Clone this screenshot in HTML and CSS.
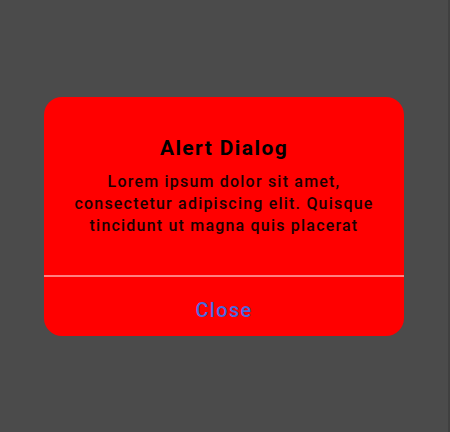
FILE: index.html
```html
<!DOCTYPE html>
<html>
<head>
<meta charset="utf-8">
<link rel="stylesheet" href="styles.css">
</head>
<body>
<div class="screen">
  <div class="dialog">
    <div class="content">
      <h2 class="title">Alert Dialog</h2>
      <p class="message">Lorem ipsum dolor sit amet, consectetur adipiscing elit. Quisque tincidunt ut magna quis placerat</p>
    </div>
    <div class="divider"></div>
    <button class="action">Close</button>
  </div>
</div>
</body>
</html>
```
FILE: styles.css
```css
html, body {
  margin: 0;
  padding: 0;
  background: #4b4b4b;
}
.screen {
  width: 450px;
  height: 432px;
  display: flex;
  align-items: center;
  justify-content: center;
  border-right: 2px solid #404040;
  box-sizing: border-box;
  font-family: Roboto, "Noto Sans", sans-serif;
}
.dialog {
  width: 360px;
  background: #ff0000;
  border-radius: 18px;
  display: flex;
  flex-direction: column;
  overflow: hidden;
}
.content {
  padding: 39px 16px 0;
  height: 178px;
  box-sizing: border-box;
  text-align: center;
}
.title {
  margin: 0;
  font-size: 21px;
  font-weight: 700;
  letter-spacing: 1.4px;
  line-height: 24px;
  color: #000;
}
.message {
  margin: 11px 0 0;
  font-size: 16px;
  font-weight: 500;
  line-height: 22px;
  letter-spacing: 1.2px;
  color: #1a0000;
}
.divider {
  height: 2px;
  background: rgba(255, 255, 255, 0.5);
}
.action {
  height: 59px;
  border: 0;
  background: transparent;
  font-family: Roboto, "Noto Sans", sans-serif;
  font-size: 20px;
  font-weight: 500;
  letter-spacing: 1.3px;
  color: #4868de;
  padding: 7px 0 0;
}
```
